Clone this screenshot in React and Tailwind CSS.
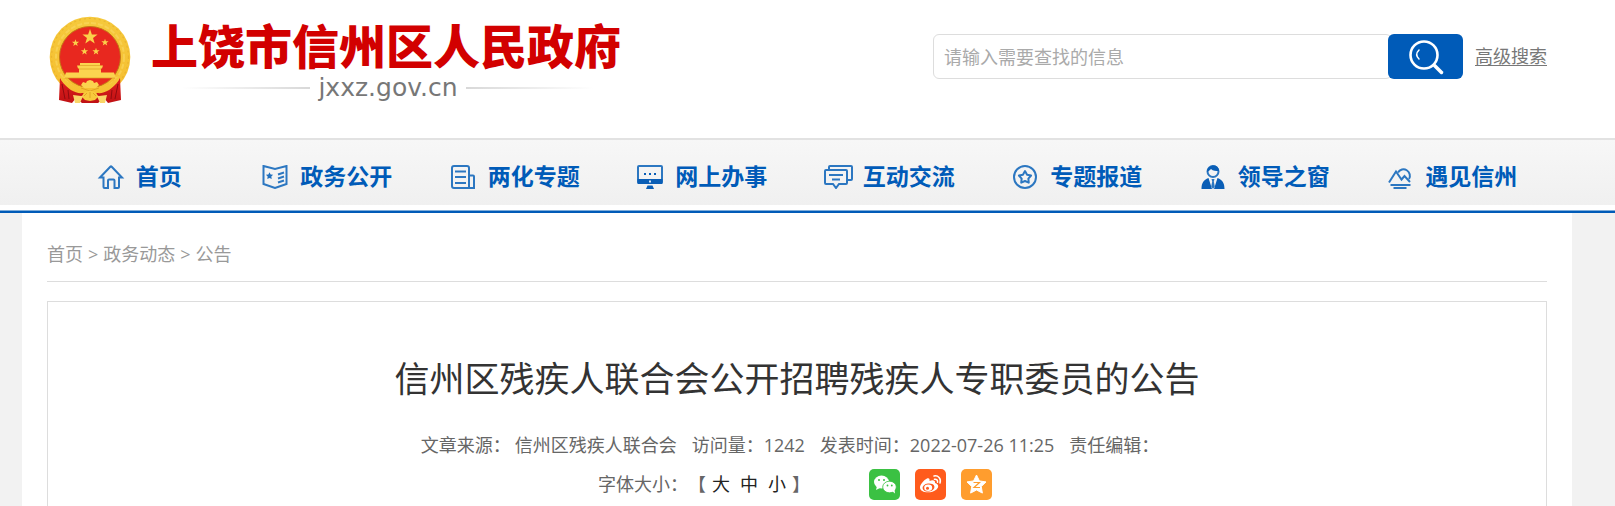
const star = (cx, cy, r, inner = 0.4) =>
  Array.from({ length: 10 }, (_, i) => {
    const a = -Math.PI / 2 + (i * Math.PI) / 5;
    const d = i % 2 ? r * inner : r;
    return `${(cx + d * Math.cos(a)).toFixed(2)},${(cy + d * Math.sin(a)).toFixed(2)}`;
  }).join(' ');

function Emblem() {
  return (
    <svg viewBox="4 4 82 89" className="h-[89px] w-[82px] shrink-0" role="img" aria-label="国徽">
      <defs>
        <linearGradient id="gold" x1="0" y1="0" x2="0" y2="1">
          <stop offset="0" stopColor="#f5c93c" />
          <stop offset="1" stopColor="#f6be30" />
        </linearGradient>
        <linearGradient id="drape" x1="0" y1="0" x2="0" y2="1">
          <stop offset="0" stopColor="#e0201f" />
          <stop offset="1" stopColor="#c01114" />
        </linearGradient>
      </defs>
      <circle cx="45" cy="45" r="40.300" fill="url(#gold)" />
      <circle cx="45" cy="45" r="38.500" fill="none" stroke="#dc9c20" strokeWidth="1.200" strokeDasharray="2 3" opacity="0.4" />
      <circle cx="45" cy="45" r="34" fill="none" stroke="#fbdc6a" strokeWidth="2" strokeDasharray="5 2" opacity="0.5" />
      <circle cx="45" cy="45" r="30.5" fill="#e8281f" stroke="#c47716" strokeWidth="1" />
      <polygon points={star(45, 25, 8)} fill="#fbd04a" />
      <polygon points={star(30.5, 31, 3.8)} fill="#fbd04a" />
      <polygon points={star(60, 30.5, 3.8)} fill="#fbd04a" />
      <polygon points={star(39.5, 39.5, 3.8)} fill="#fbd04a" />
      <polygon points={star(51, 39.5, 3.8)} fill="#fbd04a" />
      <path d="M35 51h20v2.500h3l-1 3H33l-1-3h3zM34 56.500h22v4H34zM21 60.500h13v-1h22v1h13l2 5.500H19z" fill="#fbd34f" />
      <path d="M34 53.500h22M34 57h22M20 66h50" stroke="#dda024" strokeWidth="0.7" fill="none" />
      <path d="M15 66c4 5 8 9 14 12 6 3 11 3 16 3s10 0 16-3c6-3 10-7 14-12l1 22-13 3-4-5-6 5H37l-6-5-4 5-13-3z" fill="url(#drape)" />
      <path d="M17 72l3 15M73 72l-3 15M23 78l1 9M67 78l-1 9" stroke="#8f0b10" strokeWidth="1" fill="none" />
      <path d="M15 62c6 9 14 13 22 13l8 4 8-4c8 0 16-4 22-13l-1 6c-7 10-15 14-22 13l-7 3-7-3c-7 1-15-3-22-13z" fill="url(#gold)" />
      <path d="M36 73l2-3 3 1 1-2 3-1 3 1 1 2 3-1 2 3-3 3H39z" fill="#fbd34f" />
      <path d="M36 76l9 3 9-3" stroke="#dc9c20" strokeWidth="0.8" fill="none" />
      <path d="M37 85c1-5 4-6 8-6s7 1 8 6l-3 3-5 1-5-1z" fill="#f8c93c" />
      <path d="M28 83l8 1c2 0 3-1 3-2l-4 9h-5zM62 83l-8 1c-2 0-3-1-3-2l4 9h5z" fill="#f9d568" />
      <path d="M39 84l3-3M51 84l-3-3M45 80v6" stroke="#dc9c20" strokeWidth="0.8" />
    </svg>
  );
}

const icons = {
  home: (
    <path d="M4 12.500 14.300 1.700a1 1 0 0 1 1.400 0L26 12.500h-3V22a1 1 0 0 1-1 1h-3.500v-7.500a1 1 0 0 0-1-1h-4.500a1 1 0 0 0-1 1V23H8.500a1 1 0 0 1-1-1v-9.500z" />
  ),
  open: (
    <>
      <path d="M3.500 1 15 4l11.500-3v18L15 23 3.500 19z" />
      <path d="M18 9.500l6-2M18 13.500l6-2M18 17.500l6-2" />
      <polygon points={star(9.500, 11, 3.8, 0.5)} fill="#1f6fbe" stroke="none" />
    </>
  ),
  paper: (
    <>
      <path d="M6 1h13a2 2 0 0 1 2 2v20H6a2 2 0 0 1-2-2V3a2 2 0 0 1 2-2z" />
      <path d="M21 10.500h4a1 1 0 0 1 1 1V23h-5M7 6.500h11M7 12h11M7 18h11" />
    </>
  ),
  screen: (
    <>
      <rect x="3" y="1" width="24" height="17" rx="1" />
      <path d="M2.500 14h25v4a1 1 0 0 1-1 1h-23a1 1 0 0 1-1-1z" fill="#0a5eb6" stroke="none" />
      <path d="M12.500 20.500h5l1.500 3.500h-8z" fill="#0a5eb6" stroke="none" />
      <path d="M9 8h2v2H9zM14 8h2v2h-2zM19 8h2v2h-2z" fill="#0a5eb6" stroke="none" />
      <path d="M14 16.500h2" stroke="#d9e8f5" />
    </>
  ),
  chat: (
    <>
      <path d="M6 5V2a1 1 0 0 1 1-1h21a1 1 0 0 1 1 1v12a1 1 0 0 1-1 1h-3" />
      <path d="M3 5h20a1 1 0 0 1 1 1v12a1 1 0 0 1-1 1h-7l-3 4-3-4H3a1 1 0 0 1-1-1V6a1 1 0 0 1 1-1zM6 10h14M9 14.500h8" />
    </>
  ),
  topic: (
    <>
      <circle cx="15" cy="12" r="11" />
      <polygon points={star(15, 12.500, 6.4, 0.55)} strokeLinejoin="round" />
    </>
  ),
  leader: (
    <>
      <circle cx="15" cy="6.500" r="5.500" />
      <path d="M9 7c0-8 12-9 12-1-3 0-6 0-8-2-1 1-2 2-4 3z" fill="#0a5eb6" stroke="none" />
      <path d="M10.500 13 14 24H3.500c0-6 2-9 7-11zM19.500 13 16 24h10.500c0-6-2-9-7-11z" fill="#0a5eb6" stroke="none" />
      <path d="M13.500 14h3l-.7 2.500 1 5L15 24l-1.800-2.500 1-5z" fill="#2c77c1" stroke="none" />
    </>
  ),
  scenery: (
    <>
      <path d="M4 17.500 11 6.500l5.500 8L19.500 11l5.500 6" />
      <path d="M13 7.500a6.300 6.300 0 1 1 11 6.500" />
      <path d="M5.500 20h20M8.500 23h13" />
    </>
  ),
};

const navItems = [
  { label: '首页', icon: 'home' },
  { label: '政务公开', icon: 'open' },
  { label: '两化专题', icon: 'paper' },
  { label: '网上办事', icon: 'screen' },
  { label: '互动交流', icon: 'chat' },
  { label: '专题报道', icon: 'topic' },
  { label: '领导之窗', icon: 'leader' },
  { label: '遇见信州', icon: 'scenery' },
];

function Header() {
  return (
    <header className="flex h-[138px] items-start justify-between pl-[49px] pr-[68px]">
      <a href="#" className="flex items-start gap-5 pt-4">
        <Emblem />
        <span className="flex flex-col">
          <span className="text-[47px] leading-[60px] font-black text-[#d20000]">上饶市信州区人民政府</span>
          <span className="flex items-center justify-center gap-2 pl-1 text-[25px] leading-6 text-[#777]">
            <span className="h-0.5 w-32 bg-linear-to-l from-[#d8d8d8] to-white" />
            <span className="font-['DejaVu_Sans',sans-serif]">jxxz.gov.cn</span>
            <span className="h-0.5 w-32 bg-linear-to-r from-[#d8d8d8] to-white" />
          </span>
        </span>
      </a>
      <form className="flex items-center pt-[34px]" onSubmit={(e) => e.preventDefault()}>
        <input
          type="text"
          aria-label="搜索"
          placeholder="请输入需要查找的信息"
          className="h-[45px] w-[459px] rounded-md border border-[#ddd] pl-[10px] text-[18px] outline-none placeholder-[#aaa]"
        />
        <button type="submit" aria-label="搜索" className="-ml-1 flex h-[45px] w-[75px] items-center justify-center rounded-md bg-[#005bb8]">
          <svg viewBox="0 0 36 36" className="size-9" fill="none" stroke="#fff" strokeLinecap="round">
            <circle cx="16" cy="16" r="13.500" strokeWidth="2.600" />
            <path d="M11 11c-3 3-3 6 0 9" strokeWidth="1.500" />
            <path d="M26.500 26.500l7 7" strokeWidth="3.500" />
          </svg>
        </button>
        <a href="#" className="ml-3 text-[18px] text-[#777] underline underline-offset-2">高级搜索</a>
      </form>
    </header>
  );
}

function Nav() {
  return (
    <nav className="border-b-2 border-[#005bb8] pb-[6px] shadow-[inset_0_-1px_0_#7fadda]">
      <ul className="grid h-[67px] grid-cols-8 border-t-2 border-[#e2e2e2] bg-linear-to-b from-[#f7f7f7] to-[#f0f0f0] pl-[47px] pr-[68px]">
        {navItems.map((item) => (
          <li key={item.label}>
            <a href="#" className="flex h-full items-center justify-center gap-[10px] pt-2 pr-1 text-[23px] font-bold text-[#005bb8]">
              <svg viewBox="0 0 30 24" className="h-6 w-[30px]" fill="none" stroke="#2c77c1" strokeWidth="2">
                {icons[item.icon]}
              </svg>
              {item.label}
            </a>
          </li>
        ))}
      </ul>
    </nav>
  );
}

function ShareButtons() {
  return (
    <span className="flex gap-[15px]">
      <button aria-label="微信" className="size-[31px] rounded-[5px] bg-[#3bc143]">
        <svg viewBox="0 0 31 31">
          <ellipse cx="12.500" cy="13" rx="7.500" ry="6.500" fill="#fff" />
          <path d="M8 17l-1 4 4-2z" fill="#fff" />
          <ellipse cx="20.500" cy="18" rx="6.800" ry="5.800" fill="#fff" stroke="#3bc143" strokeWidth="0.800" />
          <path d="M23 22l3 2.500-.5-4z" fill="#fff" />
          <g fill="#3bc143">
            <circle cx="10" cy="11" r="1" />
            <circle cx="15" cy="11" r="1" />
            <circle cx="18.500" cy="16.500" r="0.900" />
            <circle cx="22.800" cy="16.500" r="0.900" />
          </g>
        </svg>
      </button>
      <button aria-label="微博" className="size-[31px] rounded-[5px] bg-[#ff5b1c]">
        <svg viewBox="0 0 31 31" fill="none">
          <path d="M12 9.500c2-1 3 .5 2.500 2.500 3-1.500 6-1 5.500 2 4 1.500 4 4 1.500 6.500C16 25 5 24 5 18.500c0-3 4-7.500 7-9z" fill="#fff" />
          <ellipse cx="13.500" cy="18.500" rx="6" ry="4" transform="rotate(-8 13.500 18.500)" fill="#ff5b1c" />
          <ellipse cx="13.200" cy="18.700" rx="4" ry="3.200" fill="#fff" />
          <circle cx="12.500" cy="19.300" r="1.500" fill="#ff5b1c" />
          <path d="M19 7c4-1 7.500 2.500 6 7M19.500 10.300c2-.4 3.500 1 3 3" stroke="#fff" strokeWidth="1.500" strokeLinecap="round" />
        </svg>
      </button>
      <button aria-label="QQ空间" className="size-[31px] rounded-[5px] bg-[#ff9d2e]">
        <svg viewBox="0 0 31 31">
          <polygon points={star(15.500, 16, 10, 0.5)} fill="#fff" stroke="#fff" strokeLinejoin="round" />
          <path d="M12.500 13.500h6l-5.500 5h6" fill="none" stroke="#ff9d2e" strokeWidth="1.200" />
        </svg>
      </button>
    </span>
  );
}

function Article() {
  return (
    <article className="mt-[19px] border border-b-0 border-[#ddd] pt-[49px] pb-[6px]">
      <h1 className="text-center text-[35px] leading-[56px] text-[#333]">信州区残疾人联合会公开招聘残疾人专职委员的公告</h1>
      <div className="mt-6 flex justify-center gap-[15px] pr-[14px] text-[18px] leading-7 text-[#666]">
        <span className="flex gap-1">
          <span>文章来源：</span>
          <span>信州区残疾人联合会</span>
        </span>
        <span>访问量：1242</span>
        <span>发表时间：2022-07-26 11:25</span>
        <span>责任编辑：</span>
      </div>
      <div className="mt-[10px] flex items-center justify-center gap-[59px] pr-1 text-[18px] leading-[31px] text-[#666]">
        <span className="flex">
          <span>字体大小：</span>
          【
          <span className="flex gap-[10px] px-[6px] text-[#222]">
            <button>大</button>
            <button>中</button>
            <button>小</button>
          </span>
          】
        </span>
        <ShareButtons />
      </div>
    </article>
  );
}

export default function App() {
  return (
    <div className="min-h-screen bg-white font-['Open_Sans','Noto_Sans_CJK_SC',sans-serif]">
      <Header />
      <Nav />
      <div className="bg-[#f2f2f2] pr-[43px] pl-[22px]">
        <main className="bg-white px-[25px]">
          <div className="flex h-[69px] items-center gap-[5px] border-b border-[#ddd] pt-[14px] text-[18px] text-[#999]">
            <a href="#">首页</a>
            <span>&gt;</span>
            <a href="#">政务动态</a>
            <span>&gt;</span>
            <a href="#">公告</a>
          </div>
          <Article />
        </main>
      </div>
    </div>
  );
}
